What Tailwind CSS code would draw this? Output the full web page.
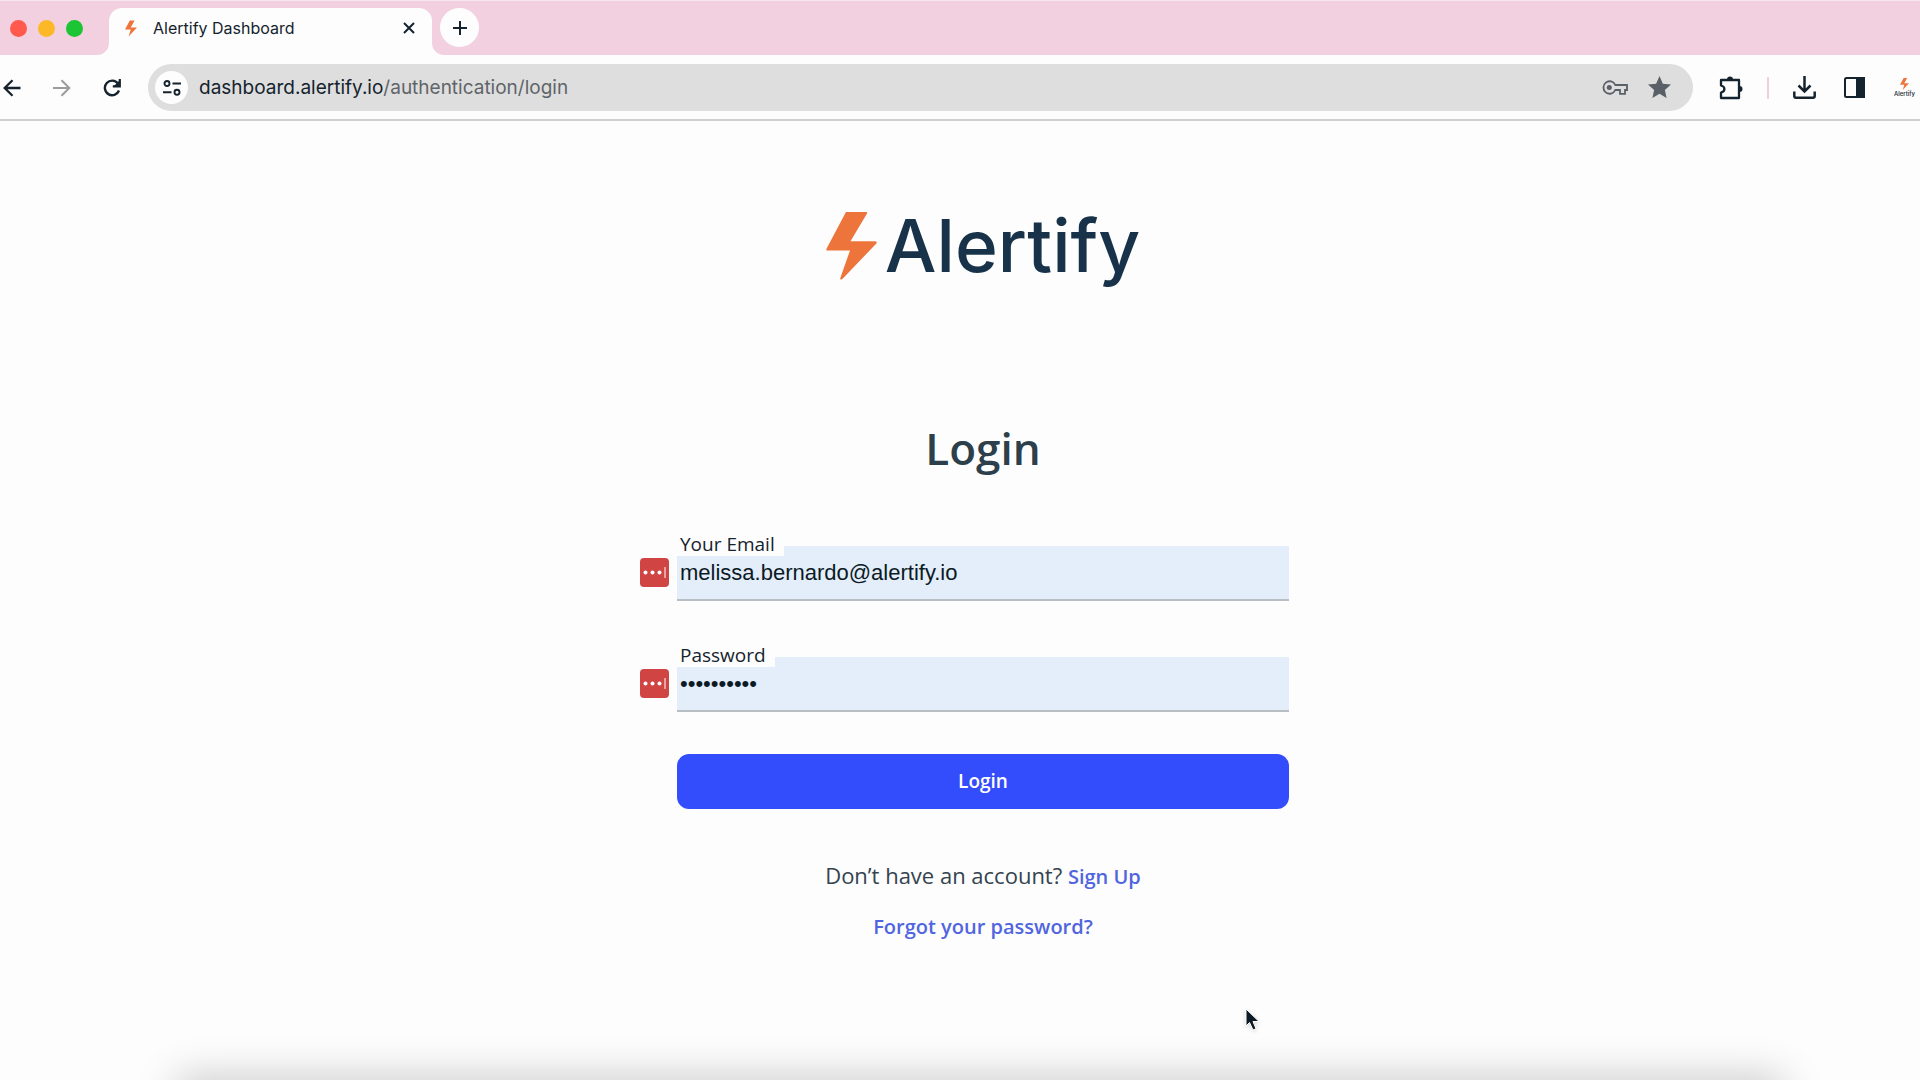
<!DOCTYPE html>
<html lang="en">
<head>
  <meta charset="UTF-8" />
  <meta name="viewport" content="width=device-width, initial-scale=1.0"/>
  <title>Alertify Dashboard</title>
  <script src="https://cdn.jsdelivr.net/npm/@tailwindcss/browser@4"></script>
</head>
<body class="relative flex min-h-screen flex-col overflow-hidden bg-[#fdfdfd] font-['Open_Sans',sans-serif] text-[#14232d]">

  <!-- Tab strip -->
  <div class="flex h-[55px] items-end border-t border-[#f7e6ee] bg-[#f2d0e0] font-[Inter,sans-serif]">
    <div class="flex h-[54px] w-[97px] items-center gap-[11px] pl-[10px]">
      <button aria-label="Close window" class="size-[17px] rounded-full bg-[#ff5a4d]"></button>
      <button aria-label="Minimize window" class="size-[17px] rounded-full bg-[#fdb827]"></button>
      <button aria-label="Zoom window" class="size-[17px] rounded-full bg-[#1bc533]"></button>
    </div>
    <svg class="size-3 text-[#fdfdfd]" viewBox="0 0 12 12" fill="currentColor"><path d="M12 0v12H0A12 12 0 0 0 12 0z"/></svg>
    <div class="flex h-[47px] w-[323px] items-center rounded-t-[13px] bg-[#fdfdfd] pr-[17px] pb-[7px] pl-4">
      <svg class="h-[17px] w-[12px]" viewBox="0 0 50 67" fill="#ed753b"><path d="M20 0H40L24 29H50L15 67L24 38H0z"/></svg>
      <span class="ml-4 flex-1 text-[16px]">Alertify Dashboard</span>
      <button aria-label="Close tab"><svg class="size-3" viewBox="0 0 12 12" fill="none" stroke="currentColor" stroke-width="2"><path d="M1 1l10 10M11 1L1 11"/></svg></button>
    </div>
    <svg class="size-3 text-[#fdfdfd]" viewBox="0 0 12 12" fill="currentColor"><path d="M0 0v12h12A12 12 0 0 1 0 0z"/></svg>
    <button aria-label="New tab" class="mb-2 -ml-1 flex size-[39px] items-center justify-center rounded-full bg-[#fdfdfd]">
      <svg class="size-[14px]" viewBox="0 0 14 14" fill="none" stroke="currentColor" stroke-width="2"><path d="M7 0v14M0 7h14"/></svg>
    </button>
  </div>

  <!-- Toolbar -->
  <div class="flex h-[66px] items-center overflow-hidden border-b-2 border-[#cfcfcf] pt-px font-[Inter,sans-serif]">
    <button aria-label="Back" class="ml-[3px]"><svg class="size-[18px]" viewBox="0 0 18 18" fill="none" stroke="currentColor" stroke-width="2.3"><path d="M17.500 9H2M9.500 1.200L1.700 9l7.800 7.800"/></svg></button>
    <button aria-label="Forward" class="ml-8 text-[#9b9c9e]"><svg class="size-[18px]" viewBox="0 0 18 18" fill="none" stroke="currentColor" stroke-width="2"><path d="M0 9h16M8.500 1.200L16.300 9l-7.800 7.800"/></svg></button>
    <button aria-label="Reload" class="ml-8"><svg class="size-[18px]" viewBox="0 0 18 18" fill="none" stroke="currentColor" stroke-width="2.400"><path d="M16 11.500A7.300 7.300 0 1 1 15 4.500"/><path d="M16.800 0v7.300H9.800" stroke-width="2.200"/><path d="M16 2v5h-5z" fill="currentColor" stroke="none"/></svg></button>
    <div class="ml-[27px] flex h-[47px] flex-1 items-center rounded-full bg-[#dedede] pl-[7px] pr-[22px]">
      <button aria-label="View site information" class="flex size-[33px] items-center justify-center rounded-full bg-[#fdfdfd]">
        <svg class="h-[16px] w-[18px]" viewBox="0 0 18 16" fill="none" stroke="currentColor" stroke-width="1.900"><circle cx="4" cy="3.500" r="2.500"/><path d="M9.500 3.500H18M0 12.300h8.500"/><circle cx="14" cy="12.300" r="2.500"/></svg>
      </button>
      <div role="textbox" contenteditable="true" spellcheck="false" aria-label="Address" class="ml-[11px] flex-1 pt-0.5 text-[19px]"><span>dashboard.alertify.io</span><span class="text-[#5f6468]">/authentication/login</span></div>
      <button aria-label="Saved passwords" class="text-[#596067]"><svg class="h-[16px] w-[26px]" viewBox="0 0 26 16" fill="none" stroke="currentColor" stroke-width="1.800"><path d="M13.300 5H25v5h-2v3.800h-5V10h-4.700A6.200 6.200 0 1 1 13.300 5z"/><circle cx="7.300" cy="7.500" r="2.500" fill="currentColor" stroke="none"/></svg></button>
      <button aria-label="Bookmark this page" class="ml-5 text-[#596067]"><svg class="size-[23px]" viewBox="0 0 24 24" fill="currentColor"><path d="M12 0l3.500 8 8.500.8-6.400 5.700L19.400 23 12 18.500 4.600 23l1.800-8.500L0 8.800 8.500 8z"/></svg></button>
    </div>
    <button aria-label="Extensions" class="ml-[26px]"><svg class="size-6" viewBox="0 0 24 24" fill="none" stroke="currentColor" stroke-width="2.300" stroke-linejoin="round"><path d="M2 4h18v18H2v-5.500c4.500-1 4.500-6 0-7z"/><path d="M8 3.500a3 3 0 0 1 6 0zM20.500 10a3 3 0 0 1 0 6z" fill="currentColor" stroke="none"/></svg></button>
    <span class="mx-6 h-[22px] w-[2px] bg-[#f2cfdf]"></span>
    <button aria-label="Downloads"><svg class="h-[23px] w-[23px]" viewBox="0 0 23 23" fill="none" stroke="currentColor" stroke-width="2.500"><path d="M11.500 0v15M5.500 9.500l6 6 6-6M1.300 15.500V20q0 1.700 1.700 1.700h17q1.700 0 1.700-1.700v-4.500"/></svg></button>
    <button aria-label="Side panel" class="ml-7"><svg class="size-[21px]" viewBox="0 0 21 21" fill="none" stroke="currentColor" stroke-width="2"><rect x="1" y="1" width="19" height="19" rx="1.500"/><path d="M13 1h7v19h-7z" fill="currentColor"/></svg></button>
    <button aria-label="Profile" class="ml-7 mr-1 flex w-[23px] flex-col items-center">
      <svg class="h-[12px] w-[9px]" viewBox="0 0 50 67" fill="#ed753b"><path d="M20 0H40L24 29H50L15 67L24 38H0z"/></svg>
      <span class="text-[6px] leading-[7px] font-medium">Alertify</span>
    </button>
  </div>

  <!-- Login page -->
  <main class="flex flex-col items-center pt-[91px] pl-[46px]">
    <div class="flex items-start gap-2">
      <svg class="h-[68px] w-[51px]" viewBox="0 0 50 67" fill="#ed753b"><path d="M20 0H39.500Q41 0 40.300 1.500L24 28.700H48.500Q50.500 29 49.500 31L16 66Q13.500 67.500 14 65L23.500 38H1.500Q-.5 38 .5 36L19 1Q19.300 0 20 0z"/></svg>
      <span class="font-[Inter,sans-serif] text-[73px] leading-[68px] font-medium text-[#18324a]">Alertify</span>
    </div>

    <form class="mt-[134px] flex w-[612px] flex-col">
      <h1 class="text-center text-[44px] leading-[68px] font-semibold text-[#2c3f4b]">Login</h1>

      <div class="relative mt-16">
        <label for="email" class="absolute -top-[14px] left-0 bg-[#fdfdfd] pr-[9px] pl-[3px] text-[19px] leading-6">Your Email</label>
        <input id="email" type="email" value="melissa.bernardo@alertify.io" class="block h-[55px] w-full border-b-2 border-[#b9bec5] bg-[#e4eefb] pl-[3px] font-['Liberation_Sans',sans-serif] text-[22px] text-[#0b1a24]">
        <svg class="absolute top-3 -left-[37px] size-[29px]" viewBox="0 0 29 29"><rect width="29" height="29" rx="4" fill="#d04543"/><g fill="#fff"><circle cx="5.500" cy="14.500" r="2"/><circle cx="12.500" cy="14.500" r="2"/><circle cx="19.500" cy="14.500" r="2"/><path d="M24.500 9h1v11h-1z"/></g></svg>
      </div>

      <div class="relative mt-14">
        <label for="password" class="absolute -top-[14px] left-0 bg-[#fdfdfd] pr-[9px] pl-[3px] text-[19px] leading-6">Password</label>
        <input id="password" type="password" value="alertify10" class="block h-[55px] w-full border-b-2 border-[#b9bec5] bg-[#e4eefb] pl-[3px] font-['Liberation_Sans',sans-serif] text-[22px] text-[#0b1a24]">
        <svg class="absolute top-3 -left-[37px] size-[29px]" viewBox="0 0 29 29"><rect width="29" height="29" rx="4" fill="#d04543"/><g fill="#fff"><circle cx="5.500" cy="14.500" r="2"/><circle cx="12.500" cy="14.500" r="2"/><circle cx="19.500" cy="14.500" r="2"/><path d="M24.500 9h1v11h-1z"/></g></svg>
      </div>

      <button type="submit" class="mt-[42px] h-[55px] rounded-xl bg-[#344dfc] text-[19px] font-semibold text-white">Login</button>
    </form>

    <p class="mt-[50px] text-[22px] leading-8 text-[#34434e]">Don’t have an account? <a href="#" class="text-[20px] font-semibold text-[#5065df]">Sign Up</a></p>
    <a href="#" class="mt-[18px] text-[20px] leading-8 font-semibold text-[#5065df]">Forgot your password?</a>
  </main>

  <!-- Shadow of the dock below the window -->
  <div class="absolute right-[140px] -bottom-10 left-[180px] h-10 shadow-[0_0_40px_4px_rgba(0,0,0,0.2)]"></div>

  <!-- Mouse pointer -->
  <svg class="absolute top-[1008px] left-[1245px] h-[26px] w-[16px] drop-shadow-sm" viewBox="0 0 16 26" fill="#0b1a24" stroke="#fff" stroke-width="1"><path d="M1 1v17l3.500-3.500L8 22l3-1.300L8 13.500h6z"/></svg>
</body>
</html>
